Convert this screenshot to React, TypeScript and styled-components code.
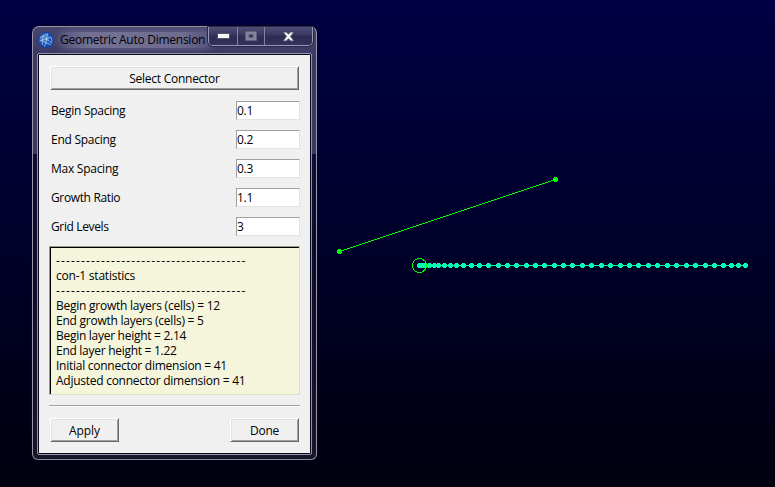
import React from "react";
import styled, { createGlobalStyle } from "styled-components";

const Global = createGlobalStyle`
  * { box-sizing: border-box; }
  body { margin: 0; overflow: hidden; font: 12px/15px "Open Sans", "Noto Sans", sans-serif; color: #000; }
`;

const Viewport = styled.main`
  position: relative;
  width: 775px;
  height: 487px;
  padding: 26px 0 0 32px;
  background: linear-gradient(#000044, #00000f);
`;

const Scene = styled.svg`
  position: absolute;
  inset: 0;
`;

const Dialog = styled.section`
  position: relative;
  display: flex;
  flex-direction: column;
  width: 285px;
  height: 434px;
  padding: 0 5px 5px;
  border: 1px solid #9694ab;
  border-color: #9694ab #9795a8 #8c8b98;
  border-radius: 7px 7px 6px 6px;
  box-shadow: 0 0 0 1px #05051c;
  background: linear-gradient(#48466f 0, #3c3a64 28px, #3b3961 127px, #0e0c35 127px, #0d0b2c 220px, #171528 100%);
`;

const TitleBar = styled.header`
  display: flex;
  flex: 0 0 27px;
  align-items: flex-start;
`;

const Logo = styled.svg`
  flex: none;
  margin-top: 5px;
`;

const Title = styled.h1`
  flex: none;
  width: 152px;
  margin: 5px 0 0 6px;
  font-size: 12px;
  line-height: 16px;
  font-weight: 400;
  white-space: nowrap;
  letter-spacing: -0.26px;
  border-radius: 8px;
  background: linear-gradient(90deg, rgba(124,122,155,0.35), rgba(124,122,155,0.85) 20%, rgba(124,122,155,0.75) 80%, rgba(124,122,155,0.3));
  box-shadow: 0 0 6px 2px rgba(120,118,150,0.5);
`;

const CaptionButtons = styled.div`
  display: flex;
  flex: none;
  width: 105px;
  height: 19px;
  margin-left: -4px;
  border: 1px solid #9a98ae;
  border-top: 0;
  border-radius: 0 0 5px 5px;
  background: #36345f;
  box-shadow: 0 0 0 1px #29274c;
  position: relative;
`;

const CaptionButton = styled.button<{ $width: number }>`
  display: flex;
  align-items: center;
  justify-content: center;
  width: ${(p) => p.$width}px;
  height: 18px;
  padding: 0;
  border: 0;
  border-right: 1px solid #8583a0;
  background: linear-gradient(#504e76, #39375f 45%, #2d2b54 50%, #343259);
  &:first-child { border-radius: 0 0 0 4px; }
  &:last-child { border-right: 0; border-radius: 0 0 4px 0; }
`;

const Client = styled.div`
  display: flex;
  flex-direction: column;
  flex: 1;
  padding: 11px 10px 11px 11px;
  border: 1px solid #09091b;
  outline: 1px solid #9492a7;
  border-radius: 1px;
  background: #f0f0f0;
`;

const Button = styled.button<{ $width: number; $spacing: number }>`
  flex: none;
  width: ${(p) => p.$width}px;
  height: 24px;
  padding: 0;
  border: 1px solid;
  border-color: #fff #696969 #696969 #fff;
  box-shadow: inset 1px 1px #e3e3e3, inset -1px -1px #a0a0a0;
  background: #f0f0f0;
  color: #000;
  font: inherit;
  letter-spacing: ${(p) => p.$spacing}px;
`;

const Fields = styled.div`
  display: grid;
  grid-auto-rows: 19px;
  gap: 10px;
  margin: 11px 0 0 1px;
`;

const Field = styled.label<{ $spacing: number }>`
  display: flex;
  justify-content: space-between;
  align-items: center;
  letter-spacing: ${(p) => p.$spacing}px;
`;

const Input = styled.input`
  width: 64px;
  height: 19px;
  padding: 0;
  border: 1px solid;
  border-color: #a0a0a0 #e3e3e3 #e3e3e3 #a0a0a0;
  border-radius: 0;
  background: #fff;
  color: #000;
  font: inherit;
  letter-spacing: -0.3px;
`;

const Report = styled.div`
  flex: none;
  width: 251px;
  height: 149px;
  margin: 10px 0 0 -1px;
  padding: 6px 5px 0 6px;
  border: 1px solid;
  border-color: #9b9b88 #ddddc4 #ddddc4 #9b9b88;
  box-shadow: inset 1px 1px #000;
  background: #f5f5dc;
`;

const ReportLine = styled.div<{ $spacing: number }>`
  height: 15px;
  white-space: pre;
  letter-spacing: ${(p) => p.$spacing}px;
`;

const Separator = styled.hr`
  flex: none;
  width: 251px;
  height: 2px;
  margin: 10px 0 11px -1px;
  border: 0;
  border-top: 1px solid #a0a0a0;
  border-bottom: 1px solid #fff;
`;

const Actions = styled.footer`
  display: flex;
  justify-content: space-between;
  width: 249px;
`;

const fields = [
  { name: "Begin Spacing", value: "0.1", spacing: -0.26 },
  { name: "End Spacing", value: "0.2", spacing: -0.26 },
  { name: "Max Spacing", value: "0.3", spacing: -0.26 },
  { name: "Growth Ratio", value: "1.1", spacing: -0.36 },
  { name: "Grid Levels", value: "3", spacing: -0.36 },
];

const rule = "-".repeat(38);
const report = [
  { text: rule, spacing: 1.15 },
  { text: "con-1 statistics", spacing: -0.22 },
  { text: rule, spacing: 1.15 },
  { text: "Begin growth layers (cells) = 12", spacing: -0.24 },
  { text: "End growth layers (cells) = 5", spacing: -0.24 },
  { text: "Begin layer height = 2.14", spacing: -0.28 },
  { text: "End layer height = 1.22", spacing: -0.28 },
  { text: "Initial connector dimension = 41", spacing: -0.26 },
  { text: "Adjusted connector dimension = 41", spacing: -0.26 },
];

const gridPoints = [
  419, 422, 425, 429, 434, 438, 444, 450, 456, 463, 471, 479, 488, 498, 507, 516, 526, 535, 544, 554, 563,
  572, 582, 591, 601, 610, 620, 629, 638, 648, 657, 667, 676, 686, 695, 705, 714, 723, 731, 738, 745,
];

const Dot = ({ x, y }: { x: number; y: number }) => (
  <path d={`M${x - 1} ${y - 2}h3v1h1v3h-1v1h-3v-1h-1v-3h1z`} />
);

export default function App() {
  return (
    <>
      <Global />
      <Viewport>
        <Scene width="775" height="487" shapeRendering="crispEdges">
          <g fill="#00ff00">
            <path d="M339.5 251.5L555.5 179.5" stroke="#00ff00" />
            <Dot x={339} y={251} />
            <Dot x={555} y={179} />
          </g>
          <g fill="#00ffb0">
            <path d="M419 265h327v1h-327z" />
            {gridPoints.map((x) => <Dot key={x} x={x} y={265} />)}
          </g>
          <circle cx="419.5" cy="265.5" r="7" fill="none" stroke="#00ff00" />
        </Scene>
        <Dialog>
          <TitleBar>
            <Logo width="16" height="16" viewBox="0 0 16 16">
              <circle cx="8" cy="8" r="7.8" fill="#1550b0" />
              <circle cx="6.5" cy="6" r="5" fill="#4a86d2" opacity=".6" />
              <path d="M1.5 6l4-2 4-2.5M5.5 4l3 3 4.5-2M5.5 4L4 8l-3 1.5M8.5 7L8 11l-4-3 4.5-1 5 4M8 11l5 1.5M8 11l-2 4M4 8l.5 5M9.5 1.5L8.5 7M13 5l1 4-.5 2" fill="none" stroke="#d2e5fa" strokeWidth=".6" strokeLinejoin="round" />
              <circle cx="8" cy="8" r="7.4" fill="none" stroke="#153f92" strokeWidth=".8" />
            </Logo>
            <Title>Geometric Auto Dimension</Title>
            <CaptionButtons>
              <CaptionButton $width={29} aria-label="Minimize">
                <svg width="13" height="6" viewBox="0 0 13 6"><rect x=".5" y=".5" width="12" height="5" fill="#f5f5f5" stroke="#55536b" /></svg>
              </CaptionButton>
              <CaptionButton $width={27} aria-label="Maximize">
                <svg width="12" height="10" viewBox="0 0 12 10"><path d="M.5.5h11v9H.5zM4 3.5h4v3H4z" fill="#85839b" fillRule="evenodd" stroke="#625f7c" /></svg>
              </CaptionButton>
              <CaptionButton $width={47} aria-label="Close">
                <svg width="13" height="11" viewBox="0 0 13 11"><path d="M1 1h3.5l2 2.2L8.5 1H12L8.5 5.4 12 10H8.5l-2-2.3-2 2.3H1l3.5-4.6z" fill="#f7f7f7" stroke="#55536b" /></svg>
              </CaptionButton>
            </CaptionButtons>
          </TitleBar>
          <Client>
            <Button $width={249} $spacing={-0.26}>Select Connector</Button>
            <Fields>
              {fields.map((f) => (
                <Field key={f.name} $spacing={f.spacing}>
                  {f.name}
                  <Input defaultValue={f.value} />
                </Field>
              ))}
            </Fields>
            <Report>
              {report.map((line, i) => (
                <ReportLine key={i} $spacing={line.spacing}>{line.text}</ReportLine>
              ))}
            </Report>
            <Separator />
            <Actions>
              <Button $width={69} $spacing={-0.1}>Apply</Button>
              <Button $width={69} $spacing={-0.26}>Done</Button>
            </Actions>
          </Client>
        </Dialog>
      </Viewport>
    </>
  );
}
